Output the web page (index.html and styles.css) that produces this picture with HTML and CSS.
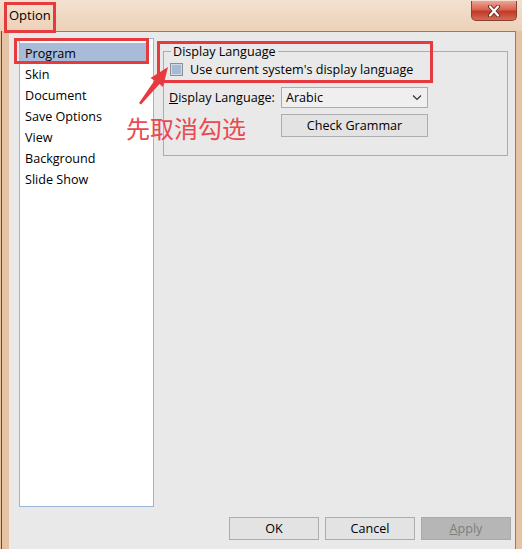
FILE: index.html
```html
<!DOCTYPE html>
<html lang="en">
<head>
<meta charset="utf-8">
<title>Option</title>
<link rel="stylesheet" href="styles.css">
</head>
<body>
<div class="window">
  <div class="titlebar">
    <span class="title">Option</span>
    <button class="close" aria-label="Close">
      <svg width="16" height="12" viewBox="0 0 16 12">
        <path d="M4 1.5 L12 10.5 M12 1.5 L4 10.5" stroke="#5a2a22" stroke-width="4" stroke-linecap="round"/>
        <path d="M4 1.5 L12 10.5 M12 1.5 L4 10.5" stroke="#ffffff" stroke-width="2.2" stroke-linecap="round"/>
      </svg>
    </button>
  </div>
  <div class="frame">
    <div class="client">
      <div class="top">
        <ul class="list">
          <li class="item sel">Program</li>
          <li class="item">Skin</li>
          <li class="item">Document</li>
          <li class="item">Save Options</li>
          <li class="item">View</li>
          <li class="item">Background</li>
          <li class="item">Slide Show</li>
        </ul>
        <div class="panel">
          <fieldset class="group">
            <legend>Display Language</legend>
            <label class="check"><span class="box"></span>Use current system's display language</label>
            <div class="row">
              <span class="lbl"><u>D</u>isplay Language:</span>
              <div class="select">
                <span>Arabic</span>
                <svg width="10" height="6" viewBox="0 0 10 6"><path d="M1 0.5 L5 4.5 L9 0.5" fill="none" stroke="#333" stroke-width="1.2"/></svg>
              </div>
            </div>
            <div class="row row2">
              <span class="lbl"></span>
              <button class="btn">Check Grammar</button>
            </div>
          </fieldset>
        </div>
      </div>
      <div class="actions">
        <button class="btn dlg">OK</button>
        <button class="btn dlg">Cancel</button>
        <button class="btn dlg apply" disabled><u>A</u>pply</button>
      </div>
    </div>
  </div>

  <div class="mark mark-title"></div>
  <div class="mark mark-program"></div>
  <div class="mark mark-check"></div>
  <svg class="arrow" width="45" height="50" viewBox="130 60 45 50">
    <polygon points="168,67 163,87 159.5,84 141,104.5 139,103 154.5,80.5 150.5,78" fill="#e63a3f"/>
  </svg>
  <div class="note">先取消勾选</div>
</div>
</body>
</html>
```
FILE: styles.css
```css
* { box-sizing: border-box; }

body {
  margin: 0;
  font-family: "Open Sans", "Noto Sans", "Noto Sans CJK SC", sans-serif;
  font-size: 12.6px;
  color: #000;
}

.window {
  position: relative;
  width: 522px;
  height: 549px;
  display: flex;
  flex-direction: column;
  background: #e6c4a3;
  overflow: hidden;
}

.titlebar {
  height: 31px;
  flex: none;
  display: flex;
  align-items: flex-start;
  background: linear-gradient(to bottom, #f3e1d0, #ecd1b7);
}

.title {
  padding: 7px 0 0 9px;
  font-size: 13px;
  line-height: 17px;
}

.close {
  margin: 1px 5px 0 auto;
  width: 46px;
  height: 20px;
  padding: 0;
  border: 1px solid #8a4034;
  border-top: none;
  border-radius: 0 0 5px 5px;
  background: linear-gradient(to bottom, #eca596 0%, #d9634f 45%, #c33a27 55%, #d66a55 100%);
  display: flex;
  align-items: center;
  justify-content: center;
}

.frame {
  flex: 1;
  display: flex;
  margin-left: 1px;
  border-left: 1px solid #5d4c40;
  padding: 0 6px 0 7px;
  min-height: 0;
}

.client {
  flex: 1;
  display: flex;
  flex-direction: column;
  background: #e9e9e9;
  border-top: 1px solid #8c7d72;
  border-right: 1px solid #8c7d72;
  padding: 6px 0 9px 10px;
}

.top {
  flex: 1;
  display: flex;
  gap: 9px;
  margin-right: 7px;
  min-height: 0;
}

.list {
  width: 135px;
  flex: none;
  margin: 0;
  padding: 4px 5px 0 0;
  list-style: none;
  background: #fff;
  border: 1px solid #9ab5d9;
}

.item {
  height: 21px;
  line-height: 21px;
  padding-left: 5px;
  white-space: nowrap;
}

.item.sel { background: #a8bcd9; }

.panel { flex: 1; min-width: 0; }

.group {
  margin: 6px 0 0;
  padding: 0 0 18px 5px;
  border: 1px solid #acacac;
  min-width: 0;
}

.group legend {
  padding: 0 2px;
  margin-left: 2px;
  line-height: 15px;
}

.check {
  display: flex;
  align-items: center;
  gap: 7px;
  height: 14px;
  margin: 3px 0 0 1px;
}

.box {
  width: 13px;
  height: 13px;
  flex: none;
  background: #a6bad6;
  border: 1px solid #8e8e8e;
  box-shadow: inset 0 0 0 1px #d0dbea;
}

.row {
  display: flex;
  align-items: center;
  margin-top: 11px;
}

.row2 { margin-top: 6px; }

.lbl {
  width: 112px;
  flex: none;
  white-space: nowrap;
}

.select {
  width: 147px;
  height: 21px;
  display: flex;
  align-items: center;
  justify-content: space-between;
  padding: 0 5px 0 4px;
  border: 1px solid #acacac;
  background: #efefef;
}

.btn {
  font: inherit;
  color: #000;
  width: 147px;
  height: 23px;
  padding: 0;
  border: 1px solid #adadad;
  background: #e3e3e3;
}

.actions {
  display: flex;
  justify-content: flex-end;
  gap: 6px;
  margin: 10px 4px 0 0;
  flex: none;
}

.dlg { width: 90px; }

.apply {
  background: #b6b6b6;
  color: #7e7e7e;
  border-color: #a9a9a9;
}

.mark {
  position: absolute;
  border: 3px solid #e63a3f;
}

.mark-title { left: 4px; top: 2px; width: 52px; height: 31px; }
.mark-program { left: 14px; top: 38px; width: 135px; height: 26px; }
.mark-check { left: 157px; top: 41px; width: 276px; height: 42px; }

.arrow {
  position: absolute;
  left: 130px;
  top: 60px;
}

.note {
  position: absolute;
  left: 126px;
  top: 111px;
  font-family: "Noto Sans CJK SC", sans-serif;
  font-size: 24px;
  line-height: 34px;
  color: #e84a50;
  white-space: nowrap;
}
```
